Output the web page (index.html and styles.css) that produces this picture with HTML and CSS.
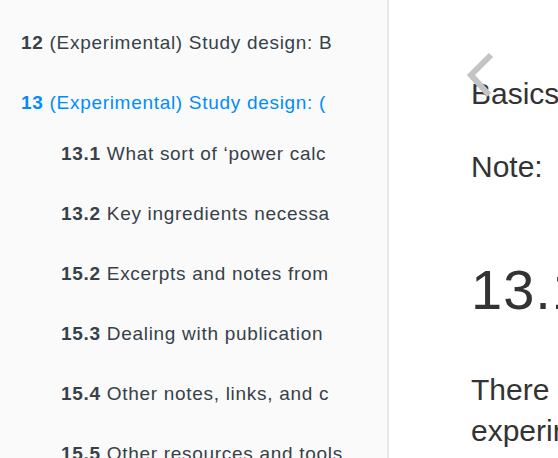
FILE: index.html
```html
<!DOCTYPE html>
<html lang="en">
<head>
<meta charset="utf-8">
<title>(Experimental) Study design</title>
<link rel="stylesheet" href="styles.css">
</head>
<body>
<div class="book">
  <nav class="summary">
    <ul class="toc">
      <li class="chapter"><a href="#"><b>12</b> (Experimental) Study design: B</a></li>
      <li class="chapter active"><a href="#"><b>13</b> (Experimental) Study design: (</a>
        <ul class="sub">
          <li><a href="#"><b>13.1</b> What sort of ‘power calc</a></li>
          <li><a href="#"><b>13.2</b> Key ingredients necessa</a></li>
          <li><a href="#"><b>15.2</b> Excerpts and notes from</a></li>
          <li><a href="#"><b>15.3</b> Dealing with publication</a></li>
          <li><a href="#"><b>15.4</b> Other notes, links, and c</a></li>
          <li><a href="#"><b>15.5</b> Other resources and tools</a></li>
        </ul>
      </li>
    </ul>
  </nav>
  <main class="body">
    <a class="nav-prev" href="#" aria-label="Previous page">
      <svg width="34" height="50" viewBox="0 0 34 50"><polyline points="29,5 9,25 27,45" fill="none" stroke="#c4c4c4" stroke-width="6"/></svg>
    </a>
    <section class="page">
      <p>Basics of power calculations and design</p>
      <p>Note:</p>
      <h2>13.1 What sort of ‘power calculations’</h2>
      <p>There are many approaches to experimental design and power</p>
    </section>
  </main>
</div>
</body>
</html>
```

FILE: styles.css
```css
html, body {
  margin: 0;
  padding: 0;
  height: 100%;
  overflow: hidden;
  background: #fff;
}

.book {
  display: flex;
  height: 458px;
  font-family: "Liberation Sans", Arial, sans-serif;
}

.summary {
  flex: 0 0 387px;
  background: #fafafa;
  border-right: 2px solid #e7e7e7;
  overflow: hidden;
}

.toc, .sub {
  list-style: none;
  margin: 0;
  padding: 0;
}

.toc {
  padding-top: 13px;
}

.toc a {
  display: block;
  padding: 18px 0 18px 21px;
  font-size: 19px;
  letter-spacing: 0.7px;
  line-height: 24px;
  color: #364149;
  text-decoration: none;
  white-space: nowrap;
}

.toc b {
  font-weight: bold;
}

.chapter.active > a {
  color: #008cff;
}

.sub {
  margin-top: -9px;
}

.sub a {
  padding-left: 61px;
}

.body {
  position: relative;
  flex: 1 1 auto;
  overflow: hidden;
  padding: 73px 0 0 82px;
}

.page {
  width: 560px;
  color: #333;
  font-size: 30px;
  line-height: 41px;
}

.page p {
  margin: 0 0 32px;
  white-space: nowrap;
}

.page p:last-child {
  white-space: normal;
}

.page h2 {
  margin: 70px 0 47px;
  font-size: 56px;
  font-weight: normal;
  line-height: 65px;
  letter-spacing: 1px;
  white-space: nowrap;
}

.nav-prev {
  position: absolute;
  left: 73px;
  top: 50px;
  display: block;
  width: 34px;
  height: 50px;
}

.nav-prev svg {
  display: block;
}
```
